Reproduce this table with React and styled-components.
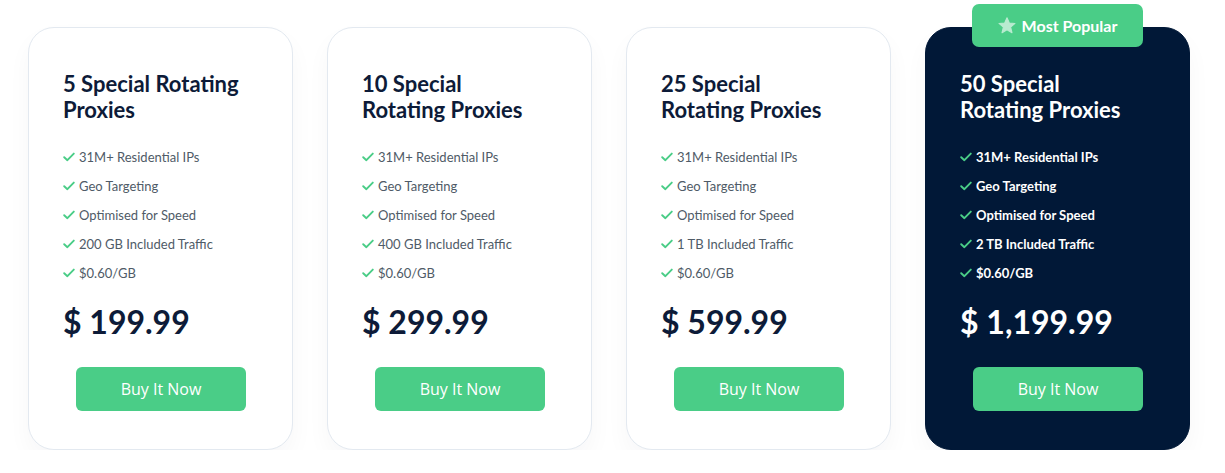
import React from 'react';
import styled, { createGlobalStyle } from 'styled-components';

const GlobalStyle = createGlobalStyle`
  body {
    margin: 0;
    background: #ffffff;
    font-family: Lato, "Open Sans", Arial, sans-serif;
  }
`;

const Page = styled.div`
  display: flex;
  gap: 34px;
  padding: 27px 0 0 28px;
`;

const Card = styled.div`
  position: relative;
  box-sizing: border-box;
  width: 265px;
  height: 423px;
  padding: 43px 0 38px 34px;
  border-radius: 26px;
  border: 1px solid ${p => (p.$featured ? '#011837' : '#e3e9f0')};
  background: ${p => (p.$featured ? '#011837' : '#ffffff')};
  box-shadow: 0 12px 24px rgba(15, 30, 60, 0.035);
  display: flex;
  flex-direction: column;
  & > * {
    flex-shrink: 0;
  }
`;

const Badge = styled.div`
  position: absolute;
  top: -24px;
  left: 46px;
  width: 171px;
  height: 43px;
  border-radius: 7px;
  background: #4acd87;
  color: #ffffff;
  font-size: 16px;
  font-weight: 700;
  display: flex;
  align-items: center;
  justify-content: center;
  gap: 6px;
`;

const Title = styled.h2`
  margin: 0;
  font-size: 22px;
  line-height: 26px;
  font-weight: 700;
  color: ${p => (p.$featured ? '#ffffff' : '#0d1b38')};
  width: 185px;
`;

const Features = styled.ul`
  list-style: none;
  margin: 25px 0 0;
  padding: 0;
  display: flex;
  flex-direction: column;
  gap: 12px;
`;

const Feature = styled.li`
  display: flex;
  align-items: center;
  gap: 4px;
  height: 17px;
  font-size: 13px;
  font-weight: ${p => (p.$featured ? 700 : 400)};
  color: ${p => (p.$featured ? '#ffffff' : '#4f5b67')};
`;

const Price = styled.div`
  margin-top: 21px;
  font-size: 32px;
  line-height: 40px;
  font-weight: 700;
  color: ${p => (p.$featured ? '#ffffff' : '#0d1b38')};
`;

const Button = styled.button`
  margin: 25px 0 0 13px;
  width: 170px;
  height: 44px;
  border: none;
  border-radius: 6px;
  background: #4acd87;
  color: #ffffff;
  font-family: "Open Sans", Arial, sans-serif;
  font-size: 16px;
  cursor: pointer;
`;

const Check = () => (
  <svg width="12" height="10" viewBox="0 0 12 10" fill="none">
    <path d="M1.2 5.2 L4.4 8.2 L10.8 1.6" stroke="#4acd87" strokeWidth="1.9" strokeLinecap="round" strokeLinejoin="round" />
  </svg>
);

const Star = () => (
  <svg width="18" height="17" viewBox="0 0 24 23">
    <path d="M12 1 L15.1 8.1 L22.8 8.7 L16.9 13.8 L18.7 21.3 L12 17.3 L5.3 21.3 L7.1 13.8 L1.2 8.7 L8.9 8.1 Z" fill="#b9ebd0" stroke="#b9ebd0" strokeWidth="1.5" strokeLinejoin="round" />
  </svg>
);

const plans = [
  { title: '5 Special Rotating Proxies', traffic: '200 GB', price: '$ 199.99' },
  { title: '10 Special Rotating Proxies', traffic: '400 GB', price: '$ 299.99' },
  { title: '25 Special Rotating Proxies', traffic: '1 TB', price: '$ 599.99' },
  { title: '50 Special Rotating Proxies', traffic: '2 TB', price: '$ 1,199.99', featured: true },
];

export default function App() {
  return (
    <>
      <GlobalStyle />
      <Page>
        {plans.map(plan => {
          const f = !!plan.featured;
          const features = [
            '31M+ Residential IPs',
            'Geo Targeting',
            'Optimised for Speed',
            `${plan.traffic} Included Traffic`,
            '$0.60/GB',
          ];
          return (
            <Card key={plan.title} $featured={f}>
              {f && (
                <Badge>
                  <Star />
                  Most Popular
                </Badge>
              )}
              <Title $featured={f}>{plan.title}</Title>
              <Features>
                {features.map(item => (
                  <Feature key={item} $featured={f}>
                    <Check />
                    {item}
                  </Feature>
                ))}
              </Features>
              <Price $featured={f}>{plan.price}</Price>
              <Button>Buy It Now</Button>
            </Card>
          );
        })}
      </Page>
    </>
  );
}
